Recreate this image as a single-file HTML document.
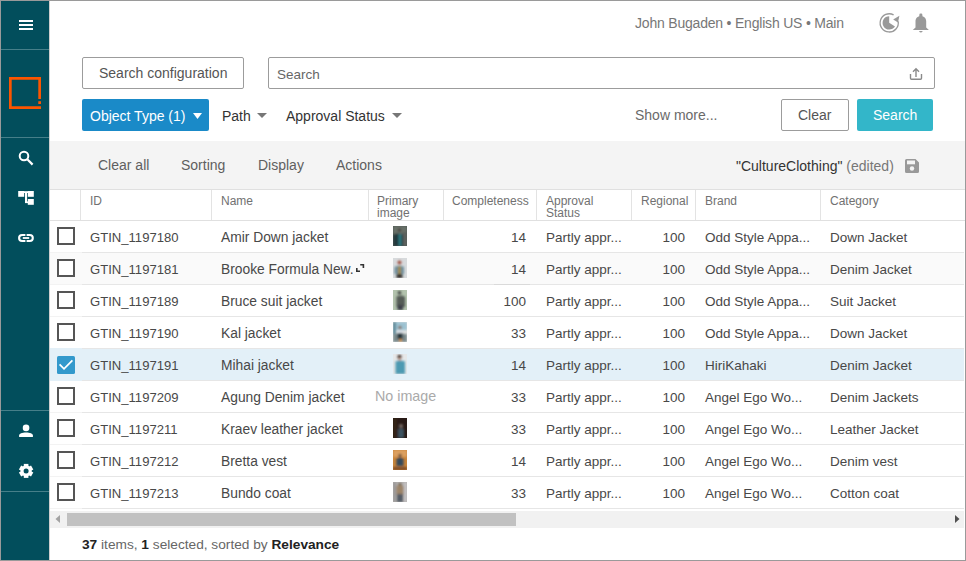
<!DOCTYPE html>
<html><head><meta charset="utf-8">
<style>
*{box-sizing:border-box;margin:0;padding:0}
html,body{width:966px;height:561px;overflow:hidden;background:#fff}
body{font-family:"Liberation Sans",sans-serif;position:relative;color:#333}
.a{position:absolute}
.frame{position:absolute;left:0;top:0;width:966px;height:561px;border:1px solid #9a9a9a;pointer-events:none;z-index:50}
#side{position:absolute;left:1px;top:1px;width:48px;height:559px;background:#024e5c}
.sep{position:absolute;left:0;width:48px;height:1px;background:#467f89}
.t{position:absolute;white-space:nowrap;line-height:1}
.btn-o{position:absolute;border:1px solid #9c9c9c;border-radius:2px;background:#fff}
.hdr{font-size:12px;color:#717171;position:absolute;line-height:12px}
.vl{position:absolute;top:190px;width:1px;height:30px;background:#e3e3e3}
.row{position:absolute;left:49px;width:915px;height:32px}
.rl{position:absolute;left:82px;width:882px;height:1px;background:#e6e6e6}
.cb{position:absolute;left:57px;width:18px;height:18px;border:2px solid #555;background:#fff}
.c{position:absolute;font-size:13.5px;color:#484848;white-space:nowrap;line-height:14px}
.r{text-align:right}
.th{position:absolute;left:393px;width:14px;height:20px}
</style></head><body>
<div class="frame"></div>

<!-- sidebar -->
<div id="side">
  <div class="a" style="left:18px;top:19px;width:14px;height:2px;background:#fff"></div>
  <div class="a" style="left:18px;top:23px;width:14px;height:2px;background:#fff"></div>
  <div class="a" style="left:18px;top:27px;width:14px;height:2px;background:#fff"></div>
  <div class="sep" style="top:48px"></div>
  <svg class="a" style="left:8px;top:76px" width="32" height="32" viewBox="0 0 32 32">
    <path d="M0 0H32V22H29.3V2.7H2.7V29.3H32V32H0Z" fill="#fc5500"/>
    <rect x="29.3" y="24.2" width="2.7" height="2.8" fill="#fc5500"/>
  </svg>
  <div class="sep" style="top:136px"></div>
  <svg class="a" style="left:-1px;top:-1px" width="50" height="561" viewBox="0 0 50 561">
    <circle cx="24" cy="156" r="4.3" fill="none" stroke="#fff" stroke-width="2"/>
    <path d="M27.3 159.3L32.6 164.6" stroke="#fff" stroke-width="2.2"/>
    <rect x="18.2" y="191" width="6" height="5.8" fill="#fff"/>
    <rect x="27.8" y="191" width="6" height="5.8" fill="#fff"/>
    <rect x="27.8" y="199" width="6" height="5.8" fill="#fff"/>
    <rect x="24" y="191.2" width="4" height="1.8" fill="#fff"/>
    <rect x="25" y="192" width="2.1" height="11" fill="#fff"/>
    <rect x="25" y="201.4" width="3" height="1.7" fill="#fff"/>
    <rect x="19.1" y="234.95" width="13.7" height="6.1" rx="3.05" fill="none" stroke="#fff" stroke-width="2.1"/>
    <rect x="25.4" y="233" width="1.2" height="10" fill="#024e5c"/>
    <rect x="22.8" y="237.1" width="6.4" height="1.8" fill="#fff"/>
  </svg>
  <div class="sep" style="top:409px"></div>
  <svg class="a" style="left:-1px;top:-1px" width="50" height="561" viewBox="0 0 50 561">
    <circle cx="26.05" cy="427.9" r="3.3" fill="#fff"/>
    <path d="M19.1 437V435.5C19.1 433.6 22 432.6 26 432.6S32.9 433.6 32.9 435.5V437Z" fill="#fff"/>
    <g transform="translate(26.1 470.9)">
      <circle r="5.6" fill="#fff"/>
      <rect x="-2.3" y="-7" width="4.6" height="14" fill="#fff"/>
      <rect x="-2.3" y="-7" width="4.6" height="14" fill="#fff" transform="rotate(60)"/>
      <rect x="-2.3" y="-7" width="4.6" height="14" fill="#fff" transform="rotate(120)"/>
      <circle r="2.5" fill="#024e5c"/>
    </g>
  </svg>
  <div class="sep" style="top:490px"></div>
</div>

<div class="a" style="left:49px;top:1px;width:1px;height:559px;background:#cdcdcd;z-index:5"></div>
<!-- header -->
<div class="t" style="left:635px;top:16px;font-size:14px;color:#777;letter-spacing:-0.2px">John Bugaden • English US • Main</div>
<svg class="a" style="left:870px;top:5px" width="70" height="35" viewBox="870 5 70 35">
  <path d="M889.2 16.2V22.8L895 26.4A6.7 6.7 0 1 1 889.2 16.2Z" fill="#999"/>
  <path d="M893.6 14.9A9.1 9.1 0 1 0 898.2 21.4" fill="none" stroke="#999" stroke-width="1.3"/>
  <path d="M893.2 19.5L899.4 15.8L898 22.5Z" fill="#999"/>
  <rect x="919.3" y="13.6" width="3.1" height="3.2" rx="1.3" fill="#999"/>
  <path d="M915.5 27.6V21.2C915.5 18.2 917.6 15.9 920.85 15.9S926.2 18.2 926.2 21.2V27.6L928.9 30H912.8Z" fill="#999"/>
  <path d="M918.9 30.9H922.8Q920.85 33.9 918.9 30.9Z" fill="#999"/>
</svg>

<!-- search row -->
<div class="btn-o" style="left:82px;top:57px;width:162px;height:32px"></div>
<div class="t" style="left:99px;top:66px;font-size:14px;color:#555">Search configuration</div>
<div class="btn-o" style="left:268px;top:57px;width:667px;height:32px"></div>
<div class="t" style="left:277px;top:67.5px;font-size:13.5px;color:#666">Search</div>
<svg class="a" style="left:908px;top:66px" width="16" height="16" viewBox="0 0 16 16">
  <path d="M2.5 8V12.2Q2.5 13.2 3.5 13.2H12.5Q13.5 13.2 13.5 12.2V8" fill="none" stroke="#8a8a8a" stroke-width="1.4"/>
  <path d="M8 11V3M5 5.8L8 2.8L11 5.8" fill="none" stroke="#8a8a8a" stroke-width="1.4"/>
</svg>

<div class="a" style="left:82px;top:99px;width:127px;height:32px;background:#1a8ac8;border-radius:2px"></div>
<div class="t" style="left:90px;top:109px;font-size:14px;color:#fff">Object Type (1)</div>
<svg class="a" style="left:193px;top:112.5px" width="9" height="6"><path d="M0 0H9L4.5 6Z" fill="#fff"/></svg>
<div class="t" style="left:222px;top:109px;font-size:14px;color:#333">Path</div>
<svg class="a" style="left:257px;top:113px" width="10" height="5"><path d="M0 0H10L5 5Z" fill="#777"/></svg>
<div class="t" style="left:286px;top:109px;font-size:14px;color:#333">Approval Status</div>
<svg class="a" style="left:392px;top:113px" width="10" height="5"><path d="M0 0H10L5 5Z" fill="#777"/></svg>

<div class="t" style="left:635px;top:108px;font-size:14px;color:#6a6a6a">Show more...</div>
<div class="btn-o" style="left:781px;top:99px;width:68px;height:32px"></div>
<div class="t" style="left:798px;top:108px;font-size:14px;color:#555">Clear</div>
<div class="a" style="left:857px;top:99px;width:76px;height:32px;background:#33b6c9;border-radius:2px"></div>
<div class="t" style="left:873px;top:108px;font-size:14px;color:#fff">Search</div>

<!-- toolbar -->
<div class="a" style="left:49px;top:141px;width:916px;height:48px;background:#f4f4f4"></div>
<div class="t" style="left:98px;top:158px;font-size:14px;color:#5f5f5f">Clear all</div>
<div class="t" style="left:181px;top:158px;font-size:14px;color:#5f5f5f">Sorting</div>
<div class="t" style="left:258px;top:158px;font-size:14px;color:#5f5f5f">Display</div>
<div class="t" style="left:336px;top:158px;font-size:14px;color:#5f5f5f">Actions</div>
<div class="t" style="left:736px;top:159px;font-size:14px;color:#333">"CultureClothing" <span style="color:#777">(edited)</span></div>
<svg class="a" style="left:904px;top:158px" width="16" height="16" viewBox="0 0 16 16">
  <path d="M1 2.5A1.5 1.5 0 0 1 2.5 1H11.5L15 4.5V13.5A1.5 1.5 0 0 1 13.5 15H2.5A1.5 1.5 0 0 1 1 13.5Z" fill="#999"/>
  <rect x="3" y="2.5" width="8" height="3.8" fill="#f4f4f4"/>
  <circle cx="8" cy="10.5" r="2.2" fill="#f4f4f4"/>
</svg>

<!-- table header -->
<div class="a" style="left:49px;top:189px;width:916px;height:1px;background:#e0e0e0"></div>
<div class="a" style="left:49px;top:220px;width:916px;height:1px;background:#e0e0e0"></div>
<div class="vl" style="left:80px"></div>
<div class="vl" style="left:211px"></div>
<div class="vl" style="left:368px"></div>
<div class="vl" style="left:443px"></div>
<div class="vl" style="left:536px"></div>
<div class="vl" style="left:631px"></div>
<div class="vl" style="left:695px"></div>
<div class="vl" style="left:820px"></div>
<div class="hdr" style="left:90px;top:195px">ID</div>
<div class="hdr" style="left:221px;top:195px">Name</div>
<div class="hdr" style="left:377px;top:195px;line-height:12px">Primary<br>image</div>
<div class="hdr" style="left:452px;top:195px">Completeness</div>
<div class="hdr" style="left:546px;top:195px;line-height:12px">Approval<br>Status</div>
<div class="hdr" style="left:641px;top:195px">Regional</div>
<div class="hdr" style="left:705px;top:195px">Brand</div>
<div class="hdr" style="left:830px;top:195px">Category</div>

<!--ROWS-->
<div class="a" style="left:50px;top:253px;width:914px;height:31px;background:#fafafa"></div>
<div class="a" style="left:50px;top:348px;width:914px;height:33px;background:#e3f0f8"></div>
<div class="rl" style="top:252px"></div>
<div class="a" style="left:50px;top:252px;width:32px;height:1px;background:#f3f3f3"></div>
<div class="rl" style="top:284px"></div>
<div class="a" style="left:50px;top:284px;width:32px;height:1px;background:#f3f3f3"></div>
<div class="rl" style="top:316px"></div>
<div class="a" style="left:50px;top:316px;width:32px;height:1px;background:#f3f3f3"></div>
<div class="rl" style="top:348px"></div>
<div class="rl" style="top:380px"></div>
<div class="rl" style="top:412px"></div>
<div class="a" style="left:50px;top:412px;width:32px;height:1px;background:#f3f3f3"></div>
<div class="rl" style="top:444px"></div>
<div class="a" style="left:50px;top:444px;width:32px;height:1px;background:#f3f3f3"></div>
<div class="rl" style="top:476px"></div>
<div class="a" style="left:50px;top:476px;width:32px;height:1px;background:#f3f3f3"></div>
<div class="rl" style="top:508px"></div>
<div class="a" style="left:50px;top:508px;width:32px;height:1px;background:#f3f3f3"></div>
<div class="a" style="left:494px;top:284px;width:36px;height:1px;background:#dadada"></div>
<div class="cb" style="top:227px"></div>
<div class="c" style="left:90px;top:231px;font-size:13.1px">GTIN_1197180</div>
<div class="c" style="left:221px;top:231px;font-size:13.8px">Amir Down jacket</div>
<svg class="th" style="top:226px" width="14" height="20" viewBox="0 0 14 20"><defs><filter id="bl0" x="-20%" y="-20%" width="140%" height="140%"><feGaussianBlur stdDeviation="0.8"/></filter><clipPath id="cp0"><rect width="14" height="20"/></clipPath></defs><rect width="14" height="20" fill="#4f5755"/><g clip-path="url(#cp0)"><g filter="url(#bl0)"><rect x="0" y="0" width="14" height="8" fill="#687068"/><rect x="9" y="6" width="5" height="14" fill="#5d625d"/><circle cx="6.5" cy="4" r="1.8" fill="#4a4440"/><path d="M0.5 20V8.5Q5 6.5 10 8.5V20Z" fill="#22383c"/><rect x="5.5" y="8" width="3" height="12" fill="#2f7a80"/></g></g></svg>
<div class="c r" style="left:443px;width:83px;top:231px">14</div>
<div class="c" style="left:546px;top:231px">Partly appr...</div>
<div class="c r" style="left:631px;width:54px;top:231px">100</div>
<div class="c" style="left:705px;top:231px">Odd Style Appa...</div>
<div class="c" style="left:830px;top:231px">Down Jacket</div>
<div class="cb" style="top:259px"></div>
<div class="c" style="left:90px;top:263px;font-size:13.1px">GTIN_1197181</div>
<div class="c" style="left:221px;top:263px;font-size:13.8px">Brooke Formula New.</div>
<svg class="th" style="top:258px" width="14" height="20" viewBox="0 0 14 20"><defs><filter id="bl1" x="-20%" y="-20%" width="140%" height="140%"><feGaussianBlur stdDeviation="0.8"/></filter><clipPath id="cp1"><rect width="14" height="20"/></clipPath></defs><rect width="14" height="20" fill="#d7dadc"/><g clip-path="url(#cp1)"><g filter="url(#bl1)"><circle cx="6.5" cy="4.5" r="2" fill="#a05040"/><path d="M1.5 16V9Q6.5 6.5 11 9V16Z" fill="#6e8e9c"/><rect x="5.2" y="8.5" width="2.6" height="8.5" fill="#a88b3c"/><rect x="3.5" y="16" width="6" height="4" fill="#35302e"/></g></g></svg>
<div class="c r" style="left:443px;width:83px;top:263px">14</div>
<div class="c" style="left:546px;top:263px">Partly appr...</div>
<div class="c r" style="left:631px;width:54px;top:263px">100</div>
<div class="c" style="left:705px;top:263px">Odd Style Appa...</div>
<div class="c" style="left:830px;top:263px">Denim Jacket</div>
<svg class="a" style="left:355px;top:263px" width="10" height="10" viewBox="0 0 10 10"><path d="M1.8 5V8.2H5M5.2 1.8H8.4V5" fill="none" stroke="#333" stroke-width="1.6"/></svg>
<div class="cb" style="top:291px"></div>
<div class="c" style="left:90px;top:295px;font-size:13.1px">GTIN_1197189</div>
<div class="c" style="left:221px;top:295px;font-size:13.8px">Bruce suit jacket</div>
<svg class="th" style="top:290px" width="14" height="20" viewBox="0 0 14 20"><defs><filter id="bl2" x="-20%" y="-20%" width="140%" height="140%"><feGaussianBlur stdDeviation="0.8"/></filter><clipPath id="cp2"><rect width="14" height="20"/></clipPath></defs><rect width="14" height="20" fill="#b3c3ad"/><g clip-path="url(#cp2)"><g filter="url(#bl2)"><circle cx="6.5" cy="2.8" r="1.8" fill="#3f4240"/><path d="M3.5 17V6.5Q8 4.5 12 7V17Z" fill="#555b57"/><rect x="4.5" y="15" width="5.5" height="5" fill="#3c3f4a"/></g></g></svg>
<div class="c r" style="left:443px;width:83px;top:295px">100</div>
<div class="c" style="left:546px;top:295px">Partly appr...</div>
<div class="c r" style="left:631px;width:54px;top:295px">100</div>
<div class="c" style="left:705px;top:295px">Odd Style Appa...</div>
<div class="c" style="left:830px;top:295px">Suit Jacket</div>
<div class="cb" style="top:323px"></div>
<div class="c" style="left:90px;top:327px;font-size:13.1px">GTIN_1197190</div>
<div class="c" style="left:221px;top:327px;font-size:13.8px">Kal jacket</div>
<svg class="th" style="top:322px" width="14" height="20" viewBox="0 0 14 20"><defs><filter id="bl3" x="-20%" y="-20%" width="140%" height="140%"><feGaussianBlur stdDeviation="0.8"/></filter><clipPath id="cp3"><rect width="14" height="20"/></clipPath></defs><rect width="14" height="20" fill="#dde0e0"/><g clip-path="url(#cp3)"><g filter="url(#bl3)"><rect width="14" height="8" fill="#9cc2d2"/><rect x="0" y="0" width="3" height="20" fill="#5a8898"/><rect x="0" y="12" width="14" height="8" fill="#7a8a8c"/><circle cx="7" cy="5.5" r="1.8" fill="#8a6f60"/><path d="M4.5 12V8.5Q7 7.5 9.5 8.5V12Z" fill="#d8e0e8"/><rect x="4.5" y="11" width="5" height="6" fill="#26343a"/><rect x="6" y="17" width="3" height="2.5" fill="#d09040"/></g></g></svg>
<div class="c r" style="left:443px;width:83px;top:327px">33</div>
<div class="c" style="left:546px;top:327px">Partly appr...</div>
<div class="c r" style="left:631px;width:54px;top:327px">100</div>
<div class="c" style="left:705px;top:327px">Odd Style Appa...</div>
<div class="c" style="left:830px;top:327px">Down Jacket</div>
<svg class="a" style="left:57px;top:356px" width="18" height="18" viewBox="0 0 18 18"><rect width="18" height="18" rx="1.6" fill="#3399cc"/><path d="M2.6 8.4L7 12.8L15.4 4.4" fill="none" stroke="#fff" stroke-width="1.7"/></svg>
<div class="c" style="left:90px;top:359px;font-size:13.1px">GTIN_1197191</div>
<div class="c" style="left:221px;top:359px;font-size:13.8px">Mihai jacket</div>
<svg class="th" style="top:354px" width="14" height="20" viewBox="0 0 14 20"><defs><filter id="bl4" x="-20%" y="-20%" width="140%" height="140%"><feGaussianBlur stdDeviation="0.8"/></filter><clipPath id="cp4"><rect width="14" height="20"/></clipPath></defs><rect width="14" height="20" fill="#e6e8e9"/><g clip-path="url(#cp4)"><g filter="url(#bl4)"><circle cx="6.5" cy="3" r="2.2" fill="#4a3a35"/><rect x="5.5" y="4" width="2.5" height="3" fill="#c8a090"/><path d="M2.5 20V7.5Q7 5.5 12 7.5V20Z" fill="#4e9ab2"/></g></g></svg>
<div class="c r" style="left:443px;width:83px;top:359px">14</div>
<div class="c" style="left:546px;top:359px">Partly appr...</div>
<div class="c r" style="left:631px;width:54px;top:359px">100</div>
<div class="c" style="left:705px;top:359px">HiriKahaki</div>
<div class="c" style="left:830px;top:359px">Denim Jacket</div>
<div class="cb" style="top:387px"></div>
<div class="c" style="left:90px;top:391px;font-size:13.1px">GTIN_1197209</div>
<div class="c" style="left:221px;top:391px;font-size:13.8px">Agung Denim jacket</div>
<div class="c" style="left:375px;top:389px;color:#aaa;font-size:14.3px">No image</div>
<div class="c r" style="left:443px;width:83px;top:391px">33</div>
<div class="c" style="left:546px;top:391px">Partly appr...</div>
<div class="c r" style="left:631px;width:54px;top:391px">100</div>
<div class="c" style="left:705px;top:391px">Angel Ego Wo...</div>
<div class="c" style="left:830px;top:391px">Denim Jackets</div>
<div class="cb" style="top:419px"></div>
<div class="c" style="left:90px;top:423px;font-size:13.1px">GTIN_1197211</div>
<div class="c" style="left:221px;top:423px;font-size:13.8px">Kraev leather jacket</div>
<svg class="th" style="top:418px" width="14" height="20" viewBox="0 0 14 20"><defs><filter id="bl6" x="-20%" y="-20%" width="140%" height="140%"><feGaussianBlur stdDeviation="0.8"/></filter><clipPath id="cp6"><rect width="14" height="20"/></clipPath></defs><rect width="14" height="20" fill="#281a16"/><g clip-path="url(#cp6)"><g filter="url(#bl6)"><rect x="0" y="0" width="4" height="20" fill="#352219"/><circle cx="8" cy="8" r="2" fill="#7a7068"/><path d="M5 20V11Q8 9.5 11 11V20Z" fill="#3d5260"/></g></g></svg>
<div class="c r" style="left:443px;width:83px;top:423px">33</div>
<div class="c" style="left:546px;top:423px">Partly appr...</div>
<div class="c r" style="left:631px;width:54px;top:423px">100</div>
<div class="c" style="left:705px;top:423px">Angel Ego Wo...</div>
<div class="c" style="left:830px;top:423px">Leather Jacket</div>
<div class="cb" style="top:451px"></div>
<div class="c" style="left:90px;top:455px;font-size:13.1px">GTIN_1197212</div>
<div class="c" style="left:221px;top:455px;font-size:13.8px">Bretta vest</div>
<svg class="th" style="top:450px" width="14" height="20" viewBox="0 0 14 20"><defs><filter id="bl7" x="-20%" y="-20%" width="140%" height="140%"><feGaussianBlur stdDeviation="0.8"/></filter><clipPath id="cp7"><rect width="14" height="20"/></clipPath></defs><rect width="14" height="20" fill="#c8843a"/><g clip-path="url(#cp7)"><g filter="url(#bl7)"><rect x="0" y="0" width="14" height="7" fill="#dca060"/><circle cx="7" cy="5.5" r="1.8" fill="#6a5040"/><path d="M3.5 16V8.5Q7 7 10.5 8.5V16Z" fill="#34485a"/><rect x="0" y="17" width="14" height="3" fill="#7a4a25"/></g></g></svg>
<div class="c r" style="left:443px;width:83px;top:455px">14</div>
<div class="c" style="left:546px;top:455px">Partly appr...</div>
<div class="c r" style="left:631px;width:54px;top:455px">100</div>
<div class="c" style="left:705px;top:455px">Angel Ego Wo...</div>
<div class="c" style="left:830px;top:455px">Denim vest</div>
<div class="cb" style="top:483px"></div>
<div class="c" style="left:90px;top:487px;font-size:13.1px">GTIN_1197213</div>
<div class="c" style="left:221px;top:487px;font-size:13.8px">Bundo coat</div>
<svg class="th" style="top:482px" width="14" height="20" viewBox="0 0 14 20"><defs><filter id="bl8" x="-20%" y="-20%" width="140%" height="140%"><feGaussianBlur stdDeviation="0.8"/></filter><clipPath id="cp8"><rect width="14" height="20"/></clipPath></defs><rect width="14" height="20" fill="#b3b0ae"/><g clip-path="url(#cp8)"><g filter="url(#bl8)"><rect x="0" y="0" width="3" height="20" fill="#9a9898"/><rect x="11" y="0" width="3" height="20" fill="#c4c2c4"/><circle cx="7" cy="2.5" r="1.6" fill="#6a5a4a"/><path d="M3.5 13V4Q7 2.5 10.5 4V13Z" fill="#9c8468"/><path d="M4 20V12H10V20Z" fill="#555c66"/></g></g></svg>
<div class="c r" style="left:443px;width:83px;top:487px">33</div>
<div class="c" style="left:546px;top:487px">Partly appr...</div>
<div class="c r" style="left:631px;width:54px;top:487px">100</div>
<div class="c" style="left:705px;top:487px">Angel Ego Wo...</div>
<div class="c" style="left:830px;top:487px">Cotton coat</div>
<!--/ROWS-->

<!-- scrollbar -->
<div class="a" style="left:49px;top:511px;width:915px;height:17px;background:#f1f1f1"></div>
<div class="a" style="left:67px;top:513px;width:449px;height:13px;background:#c1c1c1"></div>
<svg class="a" style="left:55px;top:515px" width="6" height="8"><path d="M5 0V8L0.5 4Z" fill="#a3a3a3"/></svg>
<svg class="a" style="left:954px;top:515px" width="6" height="8"><path d="M1 0V8L5.5 4Z" fill="#505050"/></svg>

<!-- footer -->
<div class="t" style="left:82px;top:538px;font-size:13.7px;color:#666"><b style="color:#222">37</b> items, <b style="color:#222">1</b> selected, sorted by <b style="color:#222">Relevance</b></div>
</body></html>
